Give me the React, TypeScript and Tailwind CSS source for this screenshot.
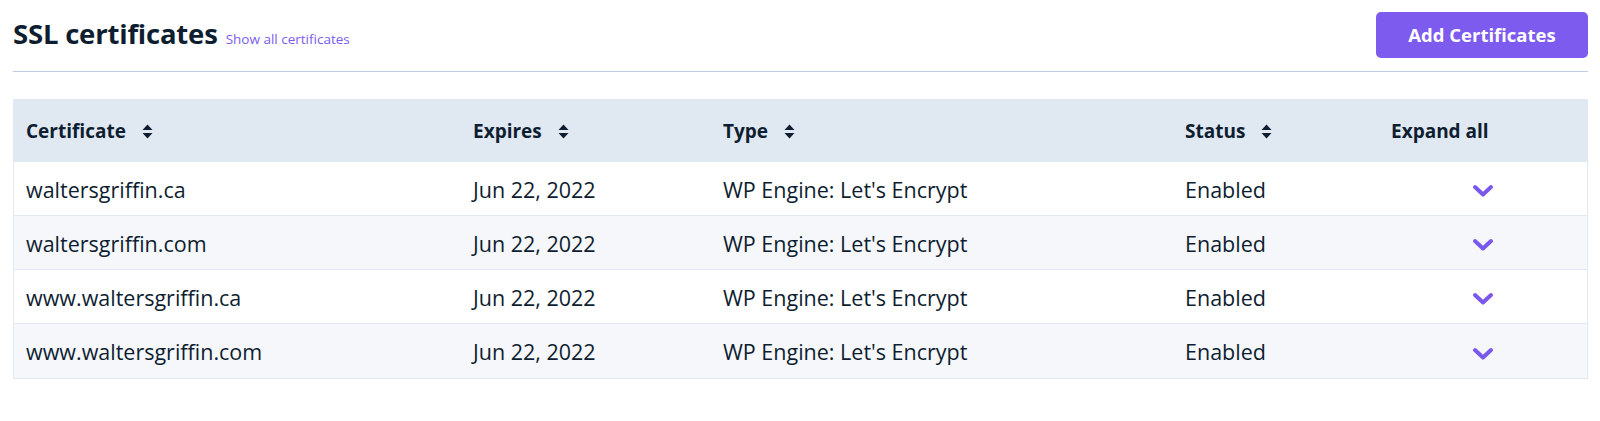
import React from "react";

const rows = [
  { name: "waltersgriffin.ca", expires: "Jun 22, 2022", type: "WP Engine: Let's Encrypt", status: "Enabled" },
  { name: "waltersgriffin.com", expires: "Jun 22, 2022", type: "WP Engine: Let's Encrypt", status: "Enabled" },
  { name: "www.waltersgriffin.ca", expires: "Jun 22, 2022", type: "WP Engine: Let's Encrypt", status: "Enabled" },
  { name: "www.waltersgriffin.com", expires: "Jun 22, 2022", type: "WP Engine: Let's Encrypt", status: "Enabled" },
];

function SortIcon() {
  return (
    <svg width="11" height="15" viewBox="0 0 11 15" className="ml-4 shrink-0" aria-hidden>
      <path d="M5.5 0.5 L10.5 6 L0.5 6 Z" fill="#0e1e30" />
      <path d="M5.5 14.5 L10.5 9 L0.5 9 Z" fill="#0e1e30" />
    </svg>
  );
}

function Chevron() {
  return (
    <svg width="22" height="14" viewBox="0 0 22 14" aria-hidden>
      <path d="M3 3 L11 10.5 L19 3" fill="none" stroke="#7b58ec" strokeWidth="4" strokeLinecap="round" strokeLinejoin="round" />
    </svg>
  );
}

const cols = "grid grid-cols-[446px_250px_462px_206px_1fr]";

export default function App() {
  return (
    <div
      className="w-[1600px] h-[421px] bg-white pl-[13px] pr-[12px] pt-3 text-[#0e1e30]"
      style={{ fontFamily: '"Open Sans", "Noto Sans", sans-serif' }}
    >
      <div className="flex items-center justify-between">
        <div className="flex items-baseline gap-2">
          <h1 className="text-[27.5px] font-bold leading-none tracking-[-0.2px]">SSL certificates</h1>
          <a className="text-[13.5px] text-[#7b5cf0]">Show all certificates</a>
        </div>
        <button className="h-[46px] w-[212px] rounded-[5px] bg-[#7e5bef] text-[18.5px] font-bold text-white">
          Add Certificates
        </button>
      </div>

      <div className="mt-[13px] h-px bg-[#bccee6]" />

      <div className="mt-[27px] border border-[#e2e9f2]">
        <div className={`${cols} h-[62px] items-center bg-[#e0e8f2] text-[19px] font-bold`}>
          <div className="flex items-center pl-[12px]">
            Certificate <SortIcon />
          </div>
          <div className="flex items-center pl-[13px]">
            Expires <SortIcon />
          </div>
          <div className="flex items-center pl-[13px]">
            Type <SortIcon />
          </div>
          <div className="flex items-center pl-[13px]">
            Status <SortIcon />
          </div>
          <div className="pl-[13px]">Expand all</div>
        </div>
        {rows.map((r, i) => (
          <div
            key={r.name}
            className={`${cols} h-[54px] items-center pt-[3px] text-[21.5px] ${i < rows.length - 1 ? "border-b border-[#e2e9f2]" : ""} ${
              i % 2 === 0 ? "bg-white" : "bg-[#f5f7fb]"
            }`}
          >
            <div className="pl-[12px]">{r.name}</div>
            <div className="pl-[13px]">{r.expires}</div>
            <div className="pl-[13px]">{r.type}</div>
            <div className="pl-[13px]">{r.status}</div>
            <div className="flex pl-[94px] pt-[2px]">
              <Chevron />
            </div>
          </div>
        ))}
      </div>
    </div>
  );
}
